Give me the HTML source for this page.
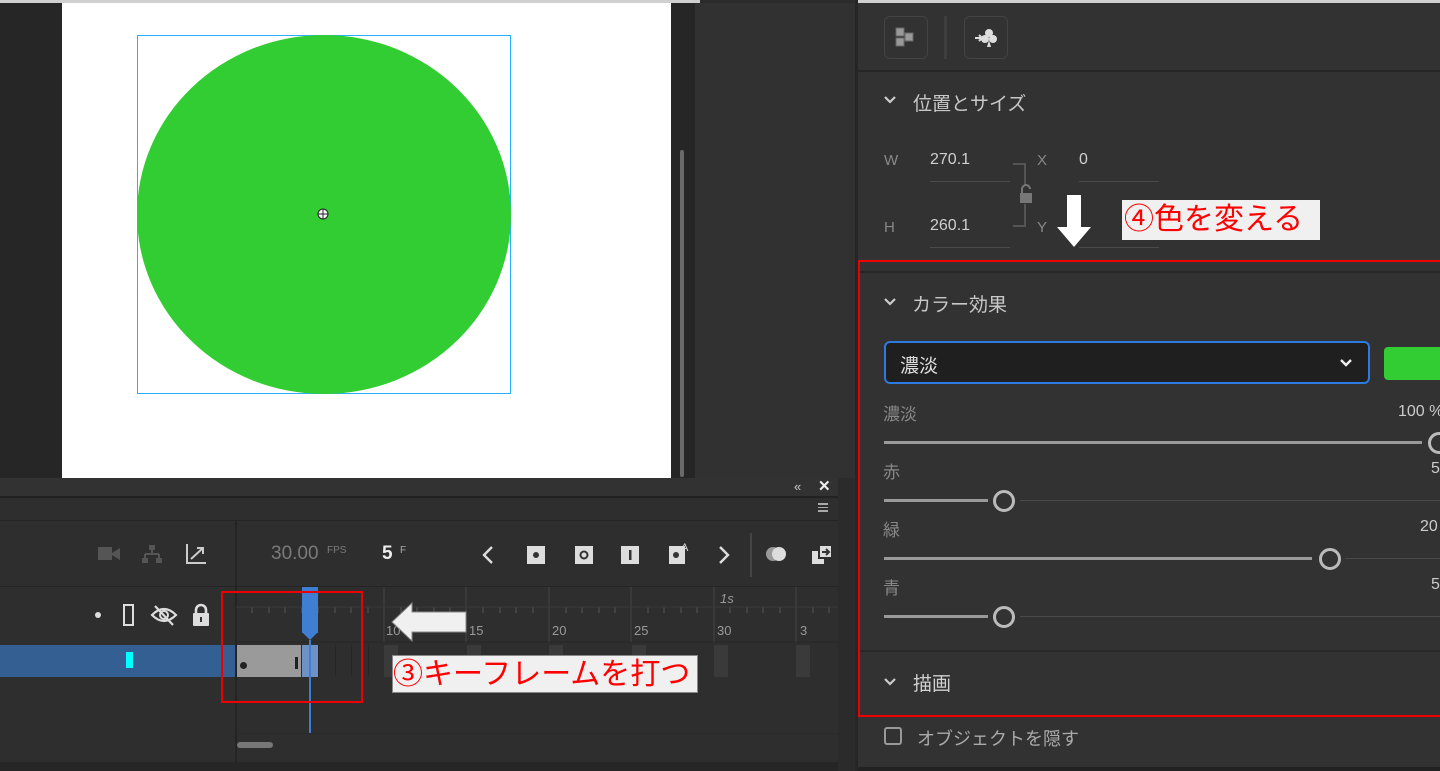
<!DOCTYPE html>
<html><head><meta charset="utf-8"><style>
*{margin:0;padding:0;box-sizing:border-box}
body{width:1440px;height:771px;overflow:hidden;background:#2b2b2b;position:relative;font-family:"Liberation Sans","Noto Sans CJK JP",sans-serif;}
.a{position:absolute}
.t{color:#b8b8b8;font-size:16px;white-space:nowrap}
</style></head><body>
<!-- stage area -->
<div class="a" style="left:0;top:0;width:62px;height:478px;background:#262626"></div>
<div class="a" style="left:0;top:0;width:700px;height:3px;background:#d0d0d0"></div>
<div class="a" style="left:62px;top:3px;width:609px;height:475px;background:#fff"></div>
<div class="a" style="left:137px;top:35px;width:374px;height:359px;border:1px solid #27b0ff"></div>
<div class="a" style="left:137px;top:35px;width:374px;height:359px;border-radius:50%;background:#32cd32"></div>
<svg class="a" style="left:317px;top:208px" width="12" height="12"><circle cx="6" cy="6" r="5" fill="#fff" stroke="#222"/><path d="M6 1V11M1 6H11" stroke="#222"/></svg>
<div class="a" style="left:671px;top:3px;width:24px;height:475px;background:#262626"></div>
<div class="a" style="left:680px;top:150px;width:4px;height:327px;background:#6a6a6a;border-radius:2px"></div>
<div class="a" style="left:695px;top:3px;width:160px;height:475px;background:#313131"></div>
<!-- right panel -->
<div class="a" style="left:855px;top:0;width:585px;height:771px;background:#323232;border-left:3px solid #262626"></div>
<div class="a" style="left:858px;top:0;width:582px;height:3px;background:#d0d0d0"></div>
<div class="a" style="left:858px;top:70px;width:582px;height:2px;background:#262626"></div>
<div class="a" style="left:884px;top:16px;width:44px;height:43px;border:1px solid #444;border-radius:6px"></div>
<svg class="a" style="left:893px;top:26px" width="26" height="24"><rect x="3" y="2" width="8" height="8" fill="#999" stroke="#666"/><rect x="12" y="7" width="8" height="8" fill="#999" stroke="#666"/><rect x="3" y="12" width="8" height="8" fill="#999" stroke="#666"/></svg>
<div class="a" style="left:944px;top:16px;width:3px;height:43px;background:#3e3e3e"></div>
<div class="a" style="left:964px;top:16px;width:44px;height:43px;border:1px solid #444;border-radius:6px"></div>
<svg class="a" style="left:973px;top:26px" width="26" height="24"><path d="M2 12H9M6 9L9 12L6 15" stroke="#ddd" stroke-width="2" fill="none"/><circle cx="16" cy="7" r="4" fill="#ddd"/><circle cx="12" cy="13" r="4" fill="#ddd"/><circle cx="20" cy="13" r="4" fill="#ddd"/><path d="M14 21H18L16 14Z" fill="#ddd"/></svg>
<svg class="a" style="left:883px;top:95px" width="14" height="10"><path d="M2 2L7 7L12 2" stroke="#ccc" stroke-width="2.2" fill="none"/></svg>
<div class="a t" style="left:913px;top:89px;font-size:19px;color:#c8c8c8">位置とサイズ</div>
<div class="a t" style="left:884px;top:152px;color:#888;font-size:15px">W</div>
<div class="a t" style="left:930px;top:151px;color:#d0d0d0">270.1</div>
<div class="a" style="left:930px;top:181px;width:80px;height:1px;background:#4a4a4a"></div>
<div class="a t" style="left:1037px;top:152px;color:#888;font-size:15px">X</div>
<div class="a t" style="left:1079px;top:151px;color:#d0d0d0">0</div>
<div class="a" style="left:1079px;top:181px;width:80px;height:1px;background:#4a4a4a"></div>
<div class="a t" style="left:884px;top:219px;color:#888;font-size:15px">H</div>
<div class="a t" style="left:930px;top:217px;color:#d0d0d0">260.1</div>
<div class="a" style="left:930px;top:247px;width:80px;height:1px;background:#4a4a4a"></div>
<div class="a t" style="left:1037px;top:219px;color:#888;font-size:15px">Y</div>
<div class="a" style="left:1079px;top:247px;width:80px;height:1px;background:#4a4a4a"></div>
<div class="a" style="left:1013px;top:163px;width:13px;height:64px;border:2px solid #555;border-left:none"></div>
<div class="a" style="left:1019px;top:186px;width:14px;height:18px;background:#323232"></div>
<svg class="a" style="left:1019px;top:184px" width="14" height="20"><path d="M3 9V5A4 4 0 0 1 11 5" stroke="#777" stroke-width="2" fill="none"/><rect x="1" y="9" width="12" height="10" fill="#777"/></svg>
<!-- down arrow -->
<svg class="a" style="left:1055px;top:193px" width="40" height="56"><path d="M12 2H26V34H36L19 54L2 34H12Z" fill="#fff"/></svg>
<div class="a" style="left:1122px;top:200px;width:198px;height:40px;background:#f0f0f0;color:#f00;font-size:30px;line-height:40px;padding-left:2px;white-space:nowrap">④色を変える</div>
<!-- red box -->
<div class="a" style="left:858px;top:260px;width:582px;height:457px;border:2px solid #e00;border-right:none"></div>
<div class="a" style="left:860px;top:271px;width:580px;height:2px;background:#262626"></div>
<svg class="a" style="left:883px;top:297px" width="14" height="10"><path d="M2 2L7 7L12 2" stroke="#ccc" stroke-width="2.2" fill="none"/></svg>
<div class="a t" style="left:912px;top:290px;font-size:19px;color:#c8c8c8">カラー効果</div>
<div class="a" style="left:884px;top:341px;width:486px;height:43px;border:2px solid #2d7ae0;border-radius:6px;background:#1f1f1f"></div>
<div class="a t" style="left:900px;top:351px;font-size:19px;color:#ddd">濃淡</div>
<svg class="a" style="left:1339px;top:358px" width="14" height="10"><path d="M2 2L7 7L12 2" stroke="#eee" stroke-width="2.4" fill="none"/></svg>
<div class="a" style="left:1384px;top:347px;width:60px;height:33px;background:#32cd32;border-radius:4px"></div>
<div class="a t" style="left:883px;top:400px;color:#888;font-size:17px">濃淡</div>
<div class="a t" style="left:1398px;top:403px;color:#ccc;font-size:16px">100 %</div>
<div class="a" style="left:884px;top:441px;width:538px;height:3px;background:#9a9a9a"></div>
<div class="a" style="left:1428px;top:432px;width:22px;height:22px;border:3px solid #bbb;border-radius:50%;background:#323232"></div>
<div class="a t" style="left:883px;top:458px;color:#888;font-size:17px">赤</div>
<div class="a t" style="left:1431px;top:460px;color:#ccc">5</div>
<div class="a" style="left:884px;top:499px;width:104px;height:3px;background:#9a9a9a"></div>
<div class="a" style="left:1020px;top:500px;width:420px;height:1px;background:#4a4a4a"></div>
<div class="a" style="left:993px;top:490px;width:22px;height:22px;border:3px solid #bbb;border-radius:50%"></div>
<div class="a t" style="left:883px;top:516px;color:#888;font-size:17px">緑</div>
<div class="a t" style="left:1420px;top:518px;color:#ccc">20</div>
<div class="a" style="left:884px;top:557px;width:428px;height:3px;background:#9a9a9a"></div>
<div class="a" style="left:1345px;top:558px;width:95px;height:1px;background:#4a4a4a"></div>
<div class="a" style="left:1319px;top:548px;width:22px;height:22px;border:3px solid #bbb;border-radius:50%"></div>
<div class="a t" style="left:883px;top:574px;color:#888;font-size:17px">青</div>
<div class="a t" style="left:1431px;top:576px;color:#ccc">5</div>
<div class="a" style="left:884px;top:615px;width:104px;height:3px;background:#9a9a9a"></div>
<div class="a" style="left:1020px;top:616px;width:420px;height:1px;background:#4a4a4a"></div>
<div class="a" style="left:993px;top:606px;width:22px;height:22px;border:3px solid #bbb;border-radius:50%"></div>
<div class="a" style="left:860px;top:650px;width:580px;height:2px;background:#292929"></div>
<svg class="a" style="left:883px;top:677px" width="14" height="10"><path d="M2 2L7 7L12 2" stroke="#ccc" stroke-width="2.2" fill="none"/></svg>
<div class="a t" style="left:913px;top:669px;font-size:19px;color:#d0d0d0">描画</div>
<div class="a" style="left:884px;top:727px;width:18px;height:18px;border:2px solid #999;border-radius:3px"></div>
<div class="a t" style="left:917px;top:725px;font-size:18px;color:#aaa">オブジェクトを隠す</div>
<div class="a" style="left:858px;top:767px;width:582px;height:4px;background:#222"></div>
<!-- timeline -->
<div class="a" style="left:0;top:478px;width:838px;height:293px;background:#2e2e2e"></div>
<div class="a" style="left:0;top:478px;width:838px;height:18px;background:#323232"></div>
<div class="a t" style="left:794px;top:479px;font-size:13px;color:#ccc">«</div>
<div class="a t" style="left:818px;top:477px;font-size:15px;color:#eee;font-weight:bold">✕</div>
<div class="a" style="left:0;top:496px;width:838px;height:2px;background:#222"></div>
<div class="a" style="left:818px;top:503px;width:10px;height:9px;border-top:2px solid #aaa;border-bottom:2px solid #aaa"></div>
<div class="a" style="left:818px;top:507px;width:10px;height:1px;background:#aaa"></div>
<div class="a" style="left:0;top:520px;width:838px;height:1px;background:#242424"></div>
<div class="a" style="left:235px;top:520px;width:2px;height:251px;background:#242424"></div>
<!-- controls -->
<svg class="a" style="left:96px;top:543px" width="28" height="22"><rect x="2" y="4" width="14" height="13" fill="#555"/><path d="M16 10L24 5V17L16 12Z" fill="#555"/></svg>
<svg class="a" style="left:140px;top:543px" width="24" height="22"><rect x="9" y="2" width="6" height="5" fill="#555"/><path d="M12 7V11M5 11H19M5 11V15M19 11V15" stroke="#555" stroke-width="2" fill="none"/><rect x="2" y="15" width="6" height="5" fill="#555"/><rect x="16" y="15" width="6" height="5" fill="#555"/></svg>
<svg class="a" style="left:184px;top:542px" width="24" height="24"><path d="M3 2V21H22M7 17L19 6M13 6H19V12" stroke="#ccc" stroke-width="2" fill="none"/></svg>
<div class="a t" style="left:271px;top:543px;font-size:19px;color:#7a7a7a">30.00</div>
<div class="a t" style="left:327px;top:545px;font-size:10px;color:#7a7a7a">FPS</div>
<div class="a t" style="left:382px;top:543px;font-size:19px;color:#eee;font-weight:bold">5</div>
<div class="a t" style="left:400px;top:545px;font-size:10px;color:#aaa">F</div>
<svg class="a" style="left:480px;top:544px" width="16" height="22"><path d="M12 3L4 11L12 19" stroke="#ddd" stroke-width="2.4" fill="none"/></svg>
<svg class="a" style="left:527px;top:546px" width="18" height="18"><rect x="0" y="0" width="18" height="18" fill="#ddd"/><circle cx="9" cy="9" r="3" fill="#333"/></svg>
<svg class="a" style="left:575px;top:546px" width="18" height="18"><rect x="0" y="0" width="18" height="18" fill="#ddd"/><circle cx="9" cy="9" r="3.5" fill="none" stroke="#333" stroke-width="2"/></svg>
<svg class="a" style="left:621px;top:546px" width="18" height="18"><rect x="0" y="0" width="18" height="18" fill="#ddd"/><rect x="8" y="4" width="2.5" height="10" fill="#333"/></svg>
<svg class="a" style="left:667px;top:540px" width="26" height="28"><rect x="2" y="6" width="16" height="18" fill="#ddd"/><circle cx="9" cy="15" r="3" fill="#333"/><text x="14" y="11" font-size="11" fill="#ddd" font-family="Liberation Sans">A</text></svg>
<svg class="a" style="left:716px;top:544px" width="16" height="22"><path d="M4 3L12 11L4 19" stroke="#ddd" stroke-width="2.4" fill="none"/></svg>
<div class="a" style="left:750px;top:533px;width:2px;height:44px;background:#444"></div>
<svg class="a" style="left:764px;top:544px" width="28" height="22"><circle cx="9" cy="10" r="7" fill="#999"/><circle cx="15" cy="10" r="7" fill="#ddd"/></svg>
<svg class="a" style="left:810px;top:543px" width="24" height="24"><rect x="2" y="8" width="12" height="13" fill="#ddd"/><rect x="9" y="2" width="13" height="13" fill="#ddd" stroke="#2e2e2e" stroke-width="2"/><path d="M12 9H19M16 6L19 9L16 12" stroke="#333" stroke-width="2" fill="none"/></svg>
<div class="a" style="left:0;top:586px;width:838px;height:1px;background:#242424"></div>
<!-- layer header icons -->
<div class="a" style="left:95px;top:612px;width:6px;height:6px;border-radius:50%;background:#ddd"></div>
<div class="a" style="left:123px;top:604px;width:11px;height:22px;border:2px solid #ddd"></div>
<svg class="a" style="left:150px;top:603px" width="28" height="24"><path d="M2 12Q14 0 26 12Q14 24 2 12Z" stroke="#ddd" stroke-width="2.2" fill="none"/><circle cx="14" cy="12" r="4" stroke="#ddd" stroke-width="2" fill="none"/><path d="M5 3L23 22" stroke="#ddd" stroke-width="2.2"/></svg>
<svg class="a" style="left:191px;top:603px" width="20" height="24"><path d="M5 11V7A5 5 0 0 1 15 7V11" stroke="#ddd" stroke-width="2.6" fill="none"/><rect x="2" y="10" width="16" height="13" rx="1" fill="#ddd"/><rect x="9" y="14" width="2" height="5" fill="#333"/></svg>
<!-- ruler -->
<svg class="a" style="left:236px;top:587px" width="602" height="147">
<g stroke="#262626">
<line x1="0" y1="55" x2="602" y2="55"/>
</g>
<g stroke="#444">
<line x1="148" y1="0" x2="148" y2="55"/><line x1="230" y1="0" x2="230" y2="55"/><line x1="313" y1="0" x2="313" y2="55"/><line x1="395" y1="0" x2="395" y2="55"/><line x1="478" y1="0" x2="478" y2="55"/><line x1="560" y1="0" x2="560" y2="55"/>
</g>
<g stroke="#555">
<path d="M16 20V26M33 20V26M49 20V26M66 20V26M82 20V26M99 20V26M115 20V26M132 20V26M165 20V26M181 20V26M198 20V26M214 20V26M247 20V26M264 20V26M280 20V26M297 20V26M330 20V26M346 20V26M363 20V26M379 20V26M412 20V26M428 20V26M445 20V26M461 20V26M494 20V26M511 20V26M527 20V26M544 20V26M577 20V26M593 20V26"/>
</g>
<line x1="0" y1="20" x2="602" y2="20" stroke="#3a3a3a"/>
<g font-family="Liberation Sans" font-size="13" fill="#999">
<text x="150" y="48">10</text><text x="233" y="48">15</text><text x="316" y="48">20</text><text x="398" y="48">25</text><text x="481" y="48">30</text><text x="564" y="48">3</text>
<text x="484" y="16" font-style="italic">1s</text>
</g>
<g fill="#262626">
<rect x="82" y="58" width="1" height="32"/><rect x="99" y="58" width="1" height="32"/><rect x="115" y="58" width="1" height="32"/><rect x="132" y="58" width="1" height="32"/><rect x="148" y="58" width="1" height="32"/>
</g>
<g fill="#3a3a3a">
<rect x="148" y="58" width="14" height="32"/><rect x="231" y="58" width="14" height="32"/><rect x="313" y="58" width="14" height="32"/><rect x="396" y="58" width="14" height="32"/><rect x="478" y="58" width="14" height="32"/><rect x="560" y="58" width="14" height="32"/>
</g>
<line x1="0" y1="147" x2="602" y2="147" stroke="#262626"/>
</svg>
<!-- layer row -->
<div class="a" style="left:0;top:645px;width:235px;height:32px;background:#345f92"></div>
<div class="a" style="left:126px;top:652px;width:7px;height:16px;background:#0ff"></div>
<div class="a" style="left:237px;top:645px;width:64px;height:32px;background:#9a9a9a"></div>
<div class="a" style="left:240px;top:662px;width:7px;height:7px;border-radius:50%;background:#222"></div>
<div class="a" style="left:295px;top:657px;width:3px;height:12px;background:#222"></div>
<div class="a" style="left:302px;top:645px;width:16px;height:32px;background:#6e92c4"></div>
<div class="a" style="left:302px;top:587px;width:16px;height:46px;background:#3f7ed0"></div>
<svg class="a" style="left:302px;top:632px" width="16" height="10"><path d="M0 0H16L8 8Z" fill="#3f7ed0"/></svg>
<div class="a" style="left:309px;top:640px;width:2px;height:93px;background:#3f7ed0"></div>
<div class="a" style="left:237px;top:742px;width:36px;height:6px;border-radius:3px;background:#777"></div>
<div class="a" style="left:0;top:762px;width:838px;height:9px;background:#262626"></div>
<!-- red box & callouts -->
<div class="a" style="left:221px;top:591px;width:142px;height:112px;border:2px solid #e00"></div>
<svg class="a" style="left:390px;top:600px" width="78" height="44"><path d="M22 3V12H76V32H22V41L2 22Z" fill="#f0f0f0" stroke="#888" stroke-width="1"/></svg>
<div class="a" style="left:392px;top:655px;width:306px;height:38px;background:#f0f0f0;color:#f00;font-size:30px;line-height:38px;white-space:nowrap;border:1px solid #888">③キーフレームを打つ</div>
</body></html>
